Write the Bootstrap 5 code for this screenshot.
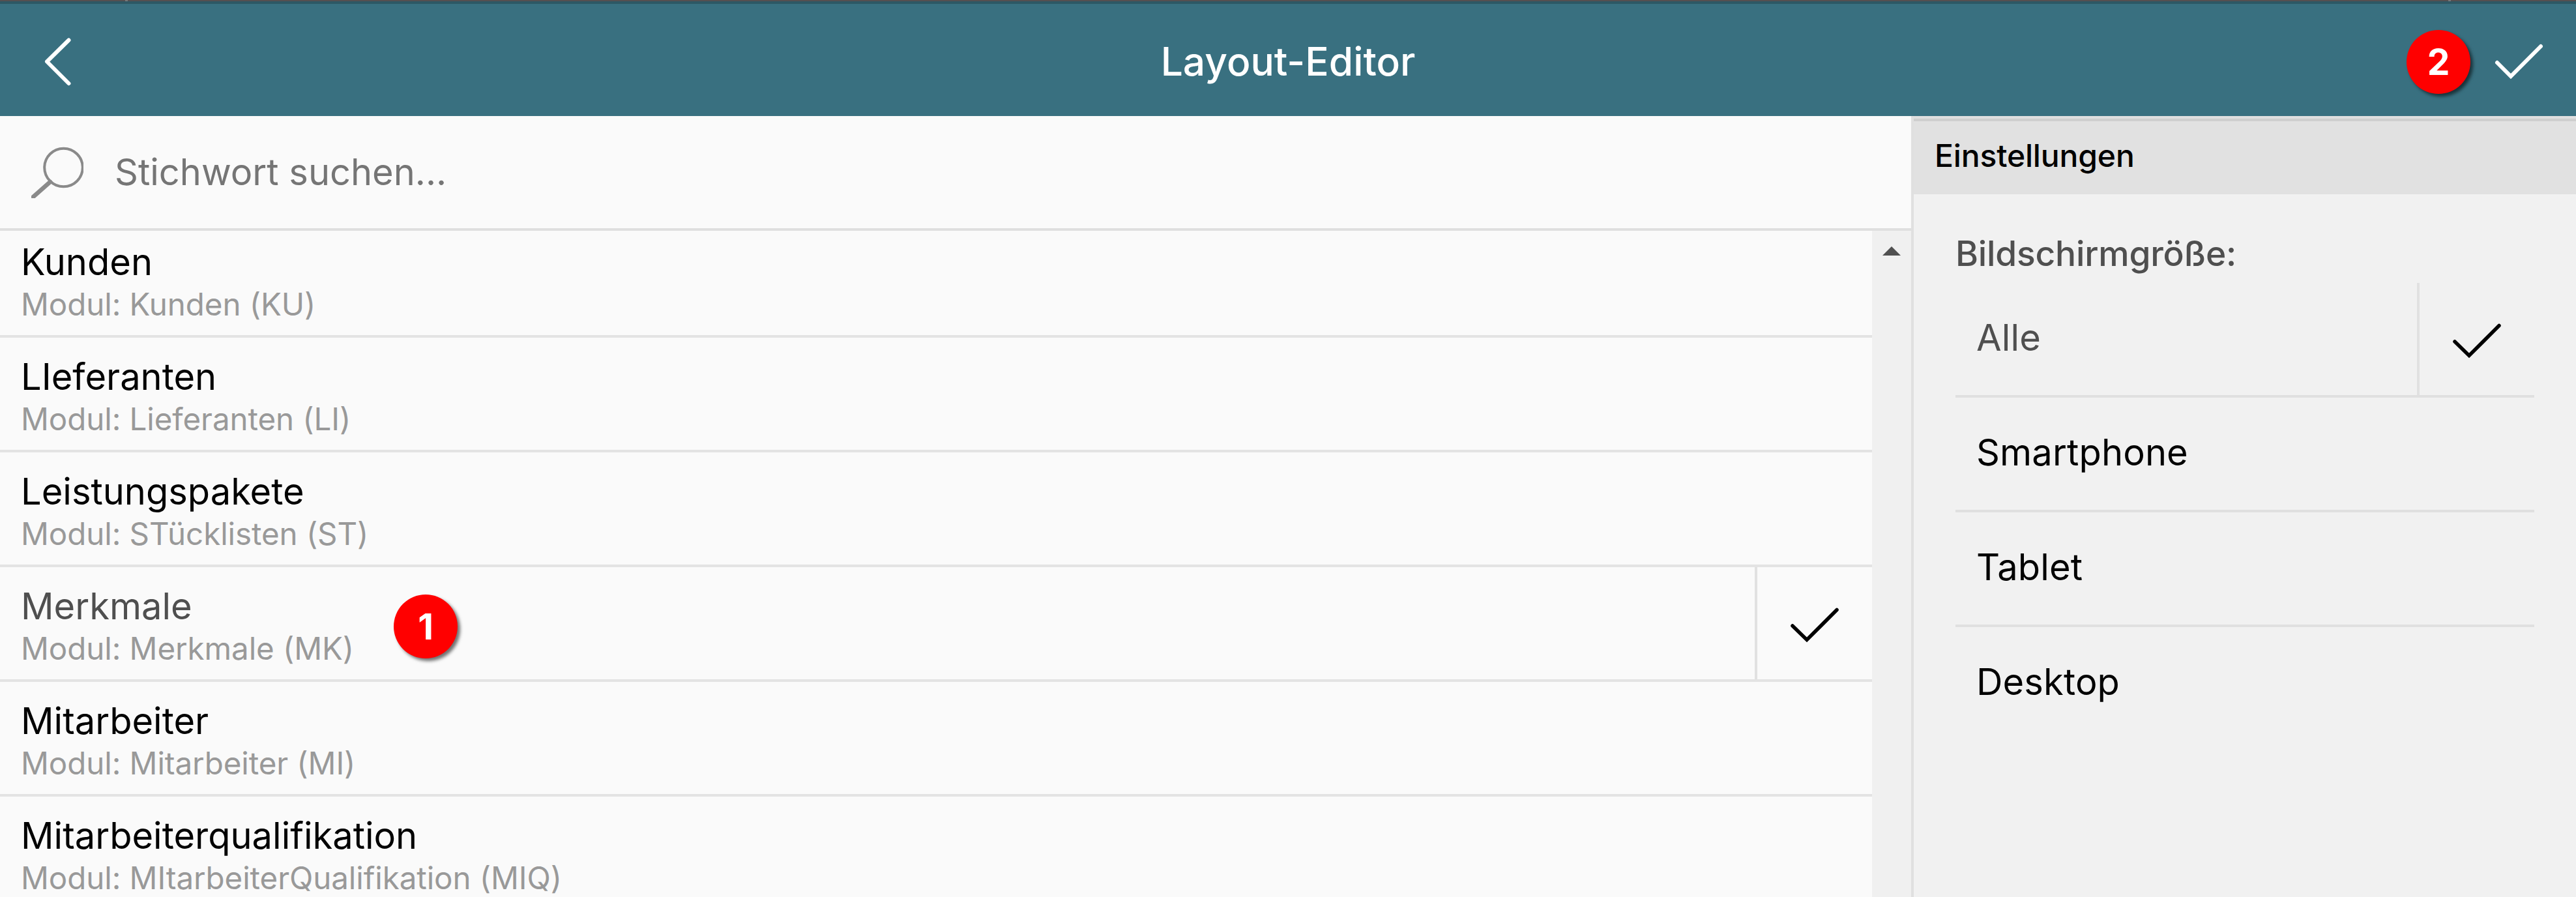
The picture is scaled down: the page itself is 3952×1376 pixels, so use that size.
<!DOCTYPE html>
<html lang="de">
<head>
<meta charset="utf-8">
<meta name="viewport" content="width=device-width, initial-scale=1">
<title>Layout-Editor</title>
<link href="https://cdn.jsdelivr.net/npm/bootstrap@5.3.0/dist/css/bootstrap.min.css" rel="stylesheet">
<style>
  body { font-family: Inter, "Liberation Sans", sans-serif; font-size: 56px; color: #000; background: #fafafa; }
  svg { display: block; fill: none; }
  .tick { stroke-width: 5.5; }

  .top-strip { height: 2px; background: #554f50; padding: 0 192px; }
  .top-strip span { width: 4px; height: 2px; background: #777; }
  .title-bar { height: 176px; padding: 0; background: #397080; border-top: 4px solid #2d5865; color: #fff; }
  .title-side { width: 280px; height: 100%; }
  .title-text { font-size: 60.5px; font-weight: 500; line-height: 72px; padding-top: 4px; }
  .step-badge { width: 98px; height: 98px; background: #f00; color: #fff; font-weight: 700; font-size: 55px; line-height: 98px; text-align: center; box-shadow: 4px 4px 5px rgba(0, 0, 0, .55); }
  .step-badge.in-title { margin: 6px auto 0 20px; }
  .step-badge.in-row { left: 604px; top: 42px; }

  .search-bar { height: 176px; padding-left: 48px; border-bottom: 4px solid #dfdfdf; }
  .search-bar input { font-size: 56px; line-height: 68px; margin-left: 48px; padding: 0; }
  .search-bar input::placeholder { color: #757575; opacity: 1; }

  .module-row { height: 176px; border-bottom: 4px solid #e3e3e3; background: #fafafa; }
  .module-row:first-child { margin-top: -12px; }
  .module-text { padding: 26px 32px 0; }
  .module-name { line-height: 68px; white-space: nowrap; }
  .module-info { font-size: 47.5px; line-height: 62px; color: #999; white-space: nowrap; letter-spacing: -.08px; }
  .chosen .module-name, .chosen.option-row { color: #4f4f4f; }
  .check-cell { width: 180px; border-left: 4px solid #e1e1e1; color: #000; }

  .scroll-track { width: 60px; background: #f0f0f0; padding-top: 24px; }

  .settings { width: 1020px; background: #f1f1f1; border-left: 4px solid #e0e0e0; }
  .settings-head { height: 120px; background: #e1e1e1; border-top: 4px solid #dfdfdf; }
  .settings-title { height: 116px; border-top: 4px solid #cfcfcf; padding: 23px 32px 0; font-size: 48px; font-weight: 500; line-height: 60px; letter-spacing: -.15px; }
  .settings-body { padding: 59px 64px 0; }
  .settings-label { font-size: 53.3px; font-weight: 500; line-height: 64px; color: #4f4f4f; margin-bottom: 13px; letter-spacing: -.2px; }
  .option-row { height: 176px; border-bottom: 4px solid #e0e0e0; padding-left: 32px; letter-spacing: .15px; }
  .option-row:last-child { border-bottom-color: transparent; }
  .option-row > span { padding-bottom: 4px; }
</style>
</head>
<body class="vh-100 overflow-hidden d-flex flex-column">

<div class="top-strip d-flex justify-content-between flex-shrink-0"><span></span><span></span></div>

<header class="title-bar navbar flex-nowrap flex-shrink-0">
  <div class="title-side d-flex align-items-center">
    <svg width="180" height="172" viewBox="0 6 180 172" stroke="#fff" stroke-width="6" stroke-linecap="round" stroke-linejoin="round"><path d="M105.500 61.500 72 94.500l33.500 33.500"/></svg>
  </div>
  <div class="title-text">Layout-Editor</div>
  <div class="title-side d-flex align-items-center">
    <span class="step-badge in-title rounded-circle flex-shrink-0">2</span>
    <svg width="150" height="172" viewBox="3802 6 150 172" stroke="#fff" stroke-width="6" stroke-linecap="round"><path d="M3831 96 3852 117 3898 71"/></svg>
  </div>
</header>

<div class="d-flex flex-grow-1 overflow-hidden">
  <main class="d-flex flex-column flex-grow-1">
    <div class="search-bar d-flex align-items-center flex-shrink-0">
      <svg width="80" height="80" viewBox="0 0 80 80" stroke="#8a8a8a"><circle cx="49.500" cy="33" r="29.300" stroke-width="4"/><path d="M29 55 3 78" stroke-width="6.500" stroke-linecap="round"/></svg>
      <input type="text" class="border-0 bg-transparent flex-grow-1" placeholder="Stichwort suchen...">
    </div>

    <div class="d-flex flex-grow-1 overflow-hidden">
      <div class="flex-grow-1 overflow-hidden">
        <div class="module-row"><div class="module-text"><div class="module-name">Kunden</div><div class="module-info">Modul: Kunden (KU)</div></div></div>
        <div class="module-row"><div class="module-text"><div class="module-name">LIeferanten</div><div class="module-info">Modul: Lieferanten (LI)</div></div></div>
        <div class="module-row"><div class="module-text"><div class="module-name">Leistungspakete</div><div class="module-info">Modul: STücklisten (ST)</div></div></div>
        <div class="module-row chosen d-flex position-relative">
          <div class="module-text flex-grow-1"><div class="module-name">Merkmale</div><div class="module-info">Modul: Merkmale (MK)</div></div>
          <span class="step-badge in-row rounded-circle position-absolute">1</span>
          <div class="check-cell">
            <svg class="tick" width="176" height="172" viewBox="0 0 176 172" stroke="#000" stroke-linecap="round"><path d="M54 90 76 111.500 122 65.500"/></svg>
          </div>
        </div>
        <div class="module-row"><div class="module-text"><div class="module-name">Mitarbeiter</div><div class="module-info">Modul: Mitarbeiter (MI)</div></div></div>
        <div class="module-row"><div class="module-text"><div class="module-name">Mitarbeiterqualifikation</div><div class="module-info">Modul: MItarbeiterQualifikation (MIQ)</div></div></div>
      </div>
      <div class="scroll-track flex-shrink-0">
        <svg class="mx-auto" width="28" height="14" viewBox="0 0 28 14"><path d="M14 0 28 14H0z" fill="#505050"/></svg>
      </div>
    </div>
  </main>

  <aside class="settings flex-shrink-0">
    <div class="settings-head"><div class="settings-title">Einstellungen</div></div>
    <div class="settings-body">
      <div class="settings-label">Bildschirmgröße:</div>
      <div>
        <div class="option-row chosen d-flex align-items-center justify-content-between">
          <span>Alle</span>
          <div class="check-cell">
            <svg class="tick" width="176" height="172" viewBox="0 0 176 172" stroke="#000" stroke-linecap="round"><path d="M54 90 76 111.500 122 65.500"/></svg>
          </div>
        </div>
        <div class="option-row d-flex align-items-center"><span>Smartphone</span></div>
        <div class="option-row d-flex align-items-center"><span>Tablet</span></div>
        <div class="option-row d-flex align-items-center"><span>Desktop</span></div>
      </div>
    </div>
  </aside>
</div>

<script src="https://cdn.jsdelivr.net/npm/bootstrap@5.3.0/dist/js/bootstrap.bundle.min.js"></script>
</body>
</html>
